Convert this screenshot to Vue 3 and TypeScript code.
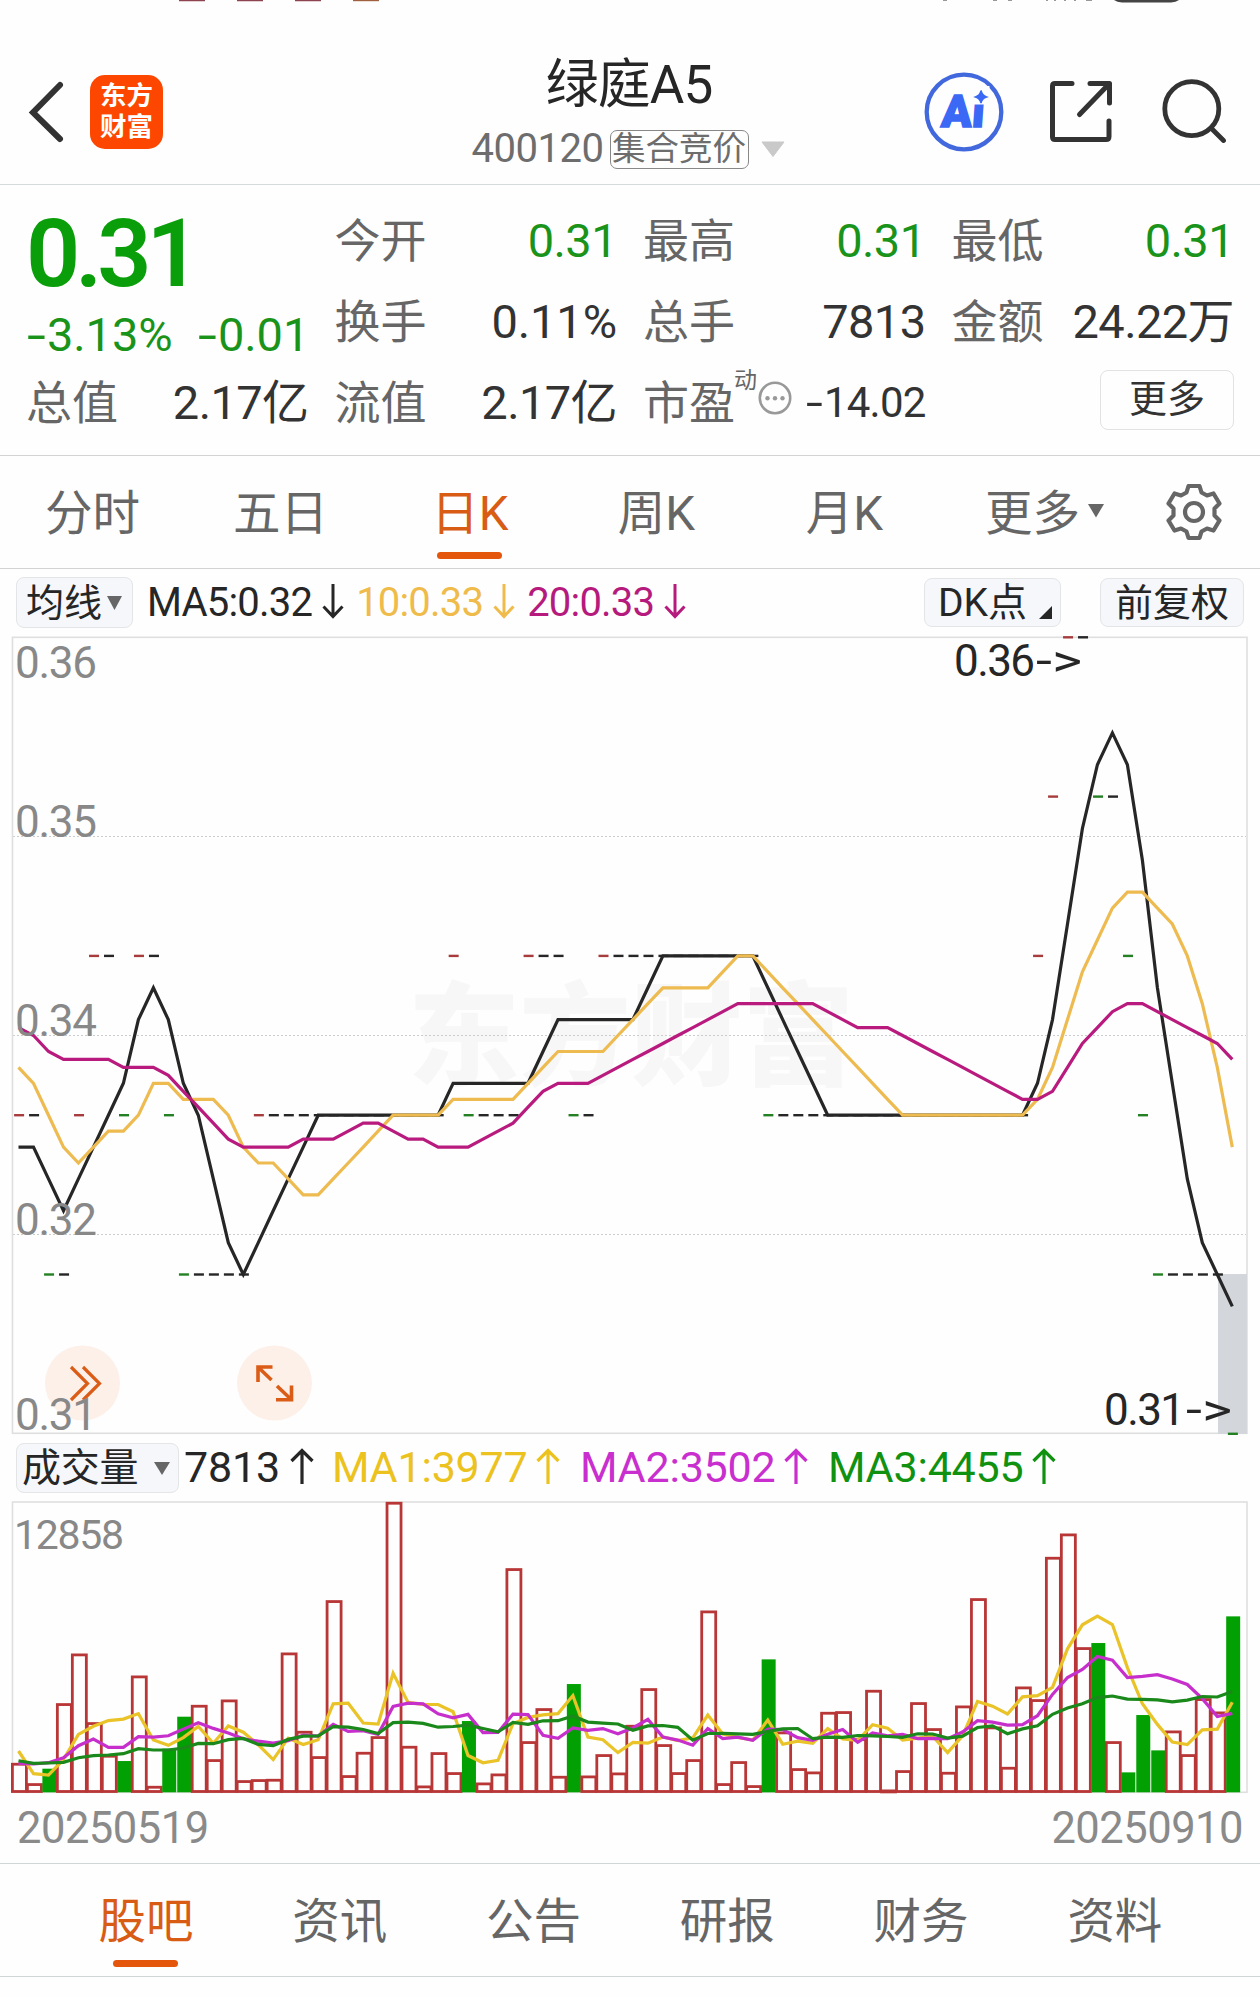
<script setup lang="ts">
interface Reading { name: string; value: string; color: string; dir: 'up' | 'down' }
interface Bar { x: number; y: number; h: number; fall: boolean }

const maReadings: Reading[] = [
  { name: 'MA5', value: '0.32', color: '#262626', dir: 'down' },
  { name: '10', value: '0.33', color: '#efbb4a', dir: 'down' },
  { name: '20', value: '0.33', color: '#b51a7c', dir: 'down' },
]
const volReadings: Reading[] = [
  { name: 'MA1', value: '3977', color: '#ecc21f', dir: 'up' },
  { name: 'MA2', value: '3502', color: '#c92fce', dir: 'up' },
  { name: 'MA3', value: '4455', color: '#109210', dir: 'up' },
]
const periods = ['分时', '五日', '日K', '周K', '月K']
const sections = ['股吧', '资讯', '公告', '研报', '财务', '资料']

const STEP = 14.985
const X0 = 18.5
const px = (i: number) => X0 + i * STEP

// Closing prices in ticks of 0.01 above 0.31; the first 19 precede the visible range.
const rep = (v: number, n: number): number[] => Array(n).fill(v)
const earlier = [3, 3, 2, 2, 3, 3, 3, 3, 3, 3, 3, 3, 3, 3, 2, 2, 2, 2, 1]
const closes = [
  2, 2, 1, 1, 2, 3, 3, 2, 3, 3, 2, ...rep(1, 5), ...rep(2, 13), 3, ...rep(2, 4), 3, 3, 3, 2, 2,
  ...rep(3, 11), ...rep(2, 18), 3, 4, 5, 5, 4, 4, 3, 2, ...rep(1, 5), 0,
]
const series = [...earlier, ...closes]
const priceY = (level: number) => 1433.8 - level * 159.3

function average(data: number[], end: number, n: number): number {
  let sum = 0
  for (let k = end - n + 1; k <= end; k++) sum += data[k]
  return sum / n
}
const priceLine = (n: number) =>
  closes.map((_, i) => `${px(i).toFixed(1)},${priceY(average(series, i + 19, n)).toFixed(1)}`).join(' ')

const ticks = closes.map((c, i) => {
  const prev = series[i + 18]
  return { x: px(i) - 4.4, y: priceY(c) - 1.2, color: c > prev ? '#a83c3c' : c < prev ? '#238023' : '#262626' }
})
const priceLines = [
  { color: '#262626', points: priceLine(5) },
  { color: '#edbb50', points: priceLine(10) },
  { color: '#b81a7e', points: priceLine(20) },
]
const axis = [
  { text: '0.36', y: 678 }, { text: '0.35', y: 836.5 }, { text: '0.34', y: 1036 },
  { text: '0.32', y: 1235 }, { text: '0.31', y: 1429.5 },
]

// Volume bar heights in thirds of a pixel.
const volumes = [
  86, 25, 69, 265, 414, 208, 110, 92, 348, 17, 129, 225, 260, 97, 276, 34, 37, 38, 417, 182, 106, 574, 49,
  119, 166, 869, 137, 18, 118, 58, 212, 27, 54, 670, 151, 250, 47, 323, 48, 112, 57, 200, 310, 142, 58, 97,
  543, 25, 91, 19, 397, 180, 70, 60, 239, 241, 160, 305, 6, 64, 268, 190, 59, 258, 580, 195, 74, 315, 277,
  704, 774, 433, 446, 151, 58, 230, 124, 183, 112, 280, 240, 526,
]
const BASE = 1791.7
const bars: Bar[] = volumes.map((v, i) => ({
  x: px(i), y: BASE - v / 3, h: v / 3, fall: closes[i] < series[i + 18],
}))
function volumeLine(n: number, lead: number[]): string {
  return volumes
    .map((_, i) => {
      const v = i < lead.length ? lead[i] : average(volumes, i, n)
      return `${px(i).toFixed(1)},${(BASE - v / 3).toFixed(1)}`
    })
    .join(' ')
}
const volumeLines = [
  { color: '#e9c327', points: volumeLine(5, [122, 54, 50, 97]) },
  { color: '#c62fcb', points: volumeLine(10, [85, 83, 87, 102, 138, 158, 133, 133, 165]) },
  { color: '#1a881a', points: volumeLine(20, [93, 85, 86, 88, 102, 108, 110, 114, 129, 125, 125, 131, 145, 144, 156, 160, 142, 138, 157]) },
]
</script>

<template>
  <div class="app">
    <header class="header">
      <svg class="status" width="1260" height="4" viewBox="0 0 1260 4">
        <path d="M179 0h26M237 0h26M295 0h26" stroke="#8d4450" stroke-width="2.4" />
        <path d="M353 0h26" stroke="#a0603f" stroke-width="2.4" />
        <path d="M943 0h4M993 0h4M1008 0h4M1046 0h2M1054 0h2M1064 0h2M1074 0h2M1086 0h6" stroke="#777" stroke-width="1.6" />
        <path d="M1114 0h65q-3 2.4-8 2.4h-49q-5 0-8-2.4z" fill="#444" />
      </svg>
      <div class="left">
        <svg width="36" height="62" viewBox="0 0 36 62"><path d="M32 4L5 31.500L32 58" fill="none" stroke="#333" stroke-width="6" stroke-linecap="round" stroke-linejoin="miter" /></svg>
        <div class="brand"><span>东方</span><span>财富</span></div>
      </div>
      <div class="title">
        <h1>绿庭A5</h1>
        <div class="sub">
          <span class="code">400120</span><span class="kind">集合竞价</span>
          <svg width="24" height="16" viewBox="0 0 24 16"><path d="M1 1h22L12 15.500z" fill="#c9c9c9" stroke="#c9c9c9" stroke-linejoin="round" /></svg>
        </div>
      </div>
      <div class="actions">
        <svg width="80" height="80" viewBox="925 72 80 80">
          <circle cx="965" cy="112" r="37.300" fill="none" stroke="#4268dd" stroke-width="4.300" />
          <g transform="translate(941.500 126.500) skewX(-4)"><text class="ai" x="0" y="0" textLength="43" lengthAdjust="spacingAndGlyphs">Ai</text></g>
          <rect x="972.500" y="86" width="18" height="18.500" fill="#fefefe" />
          <path d="M982 90.500q1 5 5.500 6.500q-4.500 1.500-5.500 6q-1-4.500-5.500-6q4.500-1.500 5.500-6z" fill="#3b68f5" stroke="#3b68f5" stroke-width="1.500" />
        </svg>
        <svg width="66" height="66" viewBox="1049 79 66 66" fill="none" stroke="#333" stroke-width="5" stroke-linecap="round" stroke-linejoin="round">
          <path d="M1073 83.500H1056q-2.500 0-2.500 2.500v51q0 2.500 2.500 2.500h51q3 0 3-3V121M1091 83.500h19.500V103M1109 85L1080.500 114.500" />
        </svg>
        <svg width="66" height="66" viewBox="1161 77 66 66" fill="none" stroke="#333" stroke-width="4.800" stroke-linecap="round">
          <circle cx="1192.800" cy="108.700" r="27" /><path d="M1213 129L1224.500 140.500" />
        </svg>
      </div>
    </header>

    <section class="stats">
      <div class="main">
        <div class="price">0.31</div>
        <div class="change"><span><i>-</i>3.13%</span><span><i>-</i>0.01</span></div>
      </div>
      <div class="stat"><span>今开</span><b class="green">0.31</b></div>
      <div class="stat"><span>最高</span><b class="green">0.31</b></div>
      <div class="stat"><span>最低</span><b class="green">0.31</b></div>
      <div class="stat"><span>换手</span><b class="pct">0.11%</b></div>
      <div class="stat"><span>总手</span><b>7813</b></div>
      <div class="stat"><span>金额</span><b>24.22万</b></div>
      <div class="stat"><span>总值</span><b>2.17亿</b></div>
      <div class="stat"><span>流值</span><b>2.17亿</b></div>
      <div class="stat pe">
        <span>市盈</span><sup>动</sup>
        <svg width="34" height="34" viewBox="0 0 34 34"><circle cx="17" cy="17" r="15.200" fill="none" stroke="#999" stroke-width="2.600" /><circle v-for="x in [9.5, 17, 24.5]" :key="x" :cx="x" cy="17.300" r="2.200" fill="#999" /></svg>
        <b><i>-</i>14.02</b>
      </div>
      <div class="more-cell"><button>更多</button></div>
    </section>

    <nav class="periods">
      <div v-for="p in periods" :key="p" class="tab" :class="{ on: p === '日K' }">{{ p }}</div>
      <div class="tab more">更多<svg width="16" height="14" viewBox="0 0 16 14"><path d="M0 0h16L8 13.500z" fill="#666" /></svg></div>
      <div class="gear">
        <svg width="58" height="60" viewBox="-29 -30 58 60" fill="none" stroke="#666" stroke-width="4.200" stroke-linejoin="round">
          <path d="M-5.500 -26H5.500L7.500 -19.500L13 -16.500L19.500 -18.500L25.500 -8.500L20.500 -3.500V3.500L25.500 8.500L19.500 18.500L13 16.500L7.500 19.500L5.500 26H-5.500L-7.500 19.500L-13 16.500L-19.500 18.500L-25.500 8.500L-20.500 3.500V-3.500L-25.500 -8.500L-19.500 -18.500L-13 -16.500L-7.500 -19.500Z" />
          <circle r="9" />
        </svg>
      </div>
    </nav>

    <div class="readings">
      <div class="pill avg">均线<svg width="15" height="14" viewBox="0 0 15 14"><path d="M0 0h15L7.500 14z" fill="#666" /></svg></div>
      <div class="values">
        <span v-for="r in maReadings" :key="r.name" :style="{ color: r.color }">{{ r.name }}:{{ r.value }}<svg width="22" height="36" viewBox="0 0 22 36" fill="none" stroke="currentColor" stroke-width="3"><path d="M11 1V33M1.500 23.500L11 33.500L20.500 23.500" /></svg></span>
      </div>
      <div class="pill dk">DK点<svg width="13" height="13" viewBox="0 0 13 13"><path d="M13 0V13H0z" fill="#262626" /></svg></div>
      <div class="pill adj">前复权</div>
    </div>

    <svg class="chart" width="1260" height="799" viewBox="0 636 1260 799">
      <text class="mark" x="408" y="1077" textLength="446" lengthAdjust="spacingAndGlyphs">东方财富</text>
      <path d="M13 836.500H1246M13 1035.500H1246M13 1234.500H1246" stroke="#ccc" stroke-width="1" stroke-dasharray="2 2" />
      <rect x="12.500" y="637.300" width="1234.500" height="796" fill="none" stroke="#dfdfdf" stroke-width="1.600" />
      <rect x="1218" y="1274" width="29" height="160" fill="#d3d6db" />
      <circle cx="82.500" cy="1383" r="37.500" fill="#fdf0e9" /><circle cx="274.500" cy="1383" r="37.500" fill="#fdf0e9" />
      <path d="M71 1367L87.500 1383.500L71 1400M83 1367L99.500 1383.500L83 1400" fill="none" stroke="#db5c17" stroke-width="3.200" />
      <path d="M258 1382V1367H272.500M258 1367L271.500 1380M291.500 1385.500V1399.700H276M291.500 1399.700L277 1386" fill="none" stroke="#db5c17" stroke-width="3.600" />
      <rect v-for="(t, i) in ticks" :key="i" :x="t.x" :y="t.y" width="10" height="2.400" :fill="t.color" />
      <polyline v-for="l in priceLines" :key="l.color" :points="l.points" fill="none" :stroke="l.color" stroke-width="3.200" />
      <text v-for="a in axis" :key="a.text" class="axis" x="15" :y="a.y" textLength="82">{{ a.text }}</text>
      <text class="note" x="954" y="676" textLength="81">0.36</text><text class="note" x="1036" y="676" textLength="46" lengthAdjust="spacingAndGlyphs">-&gt;</text>
      <text class="note" x="1104" y="1425" textLength="81">0.31</text><text class="note" x="1186" y="1425" textLength="46" lengthAdjust="spacingAndGlyphs">-&gt;</text>
    </svg>

    <div class="readings vol">
      <div class="pill volume">成交量<svg width="16" height="13" viewBox="0 0 16 13"><path d="M0 0h16L8 13z" fill="#666" /></svg></div>
      <div class="values">
        <span class="now">7813<svg width="24" height="38" viewBox="0 0 24 38" fill="none" stroke="currentColor" stroke-width="3.200"><path d="M12 37V4M1.500 14L12 3.500L22.500 14" /></svg></span>
        <span v-for="r in volReadings" :key="r.name" class="vma" :style="{ color: r.color }">{{ r.name }}:{{ r.value }}<svg width="24" height="38" viewBox="0 0 24 38" fill="none" stroke="currentColor" stroke-width="3.200"><path d="M12 37V4M1.500 14L12 3.500L22.500 14" /></svg></span>
      </div>
    </div>

    <svg class="chart" width="1260" height="294" viewBox="0 1501 1260 294">
      <rect x="12.500" y="1502" width="1234.500" height="290.300" fill="none" stroke="#dfdfdf" stroke-width="1.600" />
      <text class="axis small" x="14" y="1549" textLength="110">12858</text>
      <template v-for="(b, i) in bars" :key="i">
        <rect v-if="b.fall" :x="b.x - 6.1" :y="b.y" width="14" :height="b.h + 0.6" fill="#03a003" />
        <rect v-else :x="b.x - 6.1" :y="b.y + 1.2" width="14" :height="Math.max(b.h - 1.4, 1)" fill="#fefefe" stroke="#b83636" stroke-width="2.800" />
      </template>
      <polyline v-for="l in volumeLines" :key="l.color" :points="l.points" fill="none" :stroke="l.color" stroke-width="3.200" />
    </svg>

    <div class="dates"><span>20250519</span><span>20250910</span></div>

    <nav class="sections">
      <div v-for="s in sections" :key="s" class="tab" :class="{ on: s === '股吧' }">{{ s }}</div>
    </nav>
  </div>
</template>

<style>
body { background: #fefefe; }
</style>

<style scoped>
* { box-sizing: border-box; }
.app { width: 1260px; height: 1997px; background: #fefefe; color: #333; font-family: Roboto, "Noto Sans CJK SC", sans-serif; overflow: hidden; }
svg { display: block; flex: none; }
.chart { overflow: visible; }
.header { position: relative; height: 185px; border-bottom: 1px solid #d5dada; display: grid; grid-template-columns: 400px 460px 400px; }
.status { position: absolute; top: 0; left: 0; }
.left { display: flex; align-items: flex-start; padding: 75px 0 0 28px; }
.left > svg { margin-top: 6px; }
.brand { margin-left: 26px; width: 73px; height: 74px; border-radius: 15px; background: #fd4700; color: #fff; display: flex; flex-direction: column; align-items: center; justify-content: center; font-size: 26.500px; font-weight: 700; line-height: 31px; padding-bottom: 2px; }
.title { display: flex; flex-direction: column; align-items: center; padding-top: 50px; }
h1 { margin: 0; font-size: 53px; font-weight: 400; line-height: 70px; color: #262626; letter-spacing: -1px; position: relative; left: -1px; }
.sub { display: flex; align-items: center; color: #6d6d6d; height: 40px; margin-top: 9px; width: 317px; }
.code { font-size: 40px; letter-spacing: -0.5px; width: 138px; line-height: 40px; }
.kind { font-size: 33.500px; line-height: 36px; height: 39px; width: 139px; border: 1.500px solid #888; border-radius: 7px; display: flex; justify-content: center; }
.sub svg { margin-left: 12px; }
.actions { display: flex; align-items: center; justify-content: flex-end; padding: 40px 34px 0 0; height: 184px; }
.actions svg:nth-child(2) { margin-left: 44px; }
.actions svg:nth-child(3) { margin-left: 46px; position: relative; top: -2px; }
.ai { font-family: Roboto, sans-serif; font-size: 45px; font-weight: 900; fill: #3b68f5; stroke: #3b68f5; stroke-width: 1.500px; }

.stats { height: 271px; padding: 16px 26px 0; border-bottom: 1px solid #d3d3d3; display: grid; grid-template-columns: repeat(4, 282.500px); grid-template-rows: repeat(3, 81px); column-gap: 26px; }
.main { grid-row: 1 / span 2; color: #0a9f0a; }
.price { font-size: 95px; font-weight: 600; line-height: 100px; letter-spacing: -5px; padding: 3px 0 0 0; height: 98px; }
.change { display: flex; font-size: 47px; letter-spacing: -0.1px; line-height: 72px; color: #1a931a; padding-left: 1px; white-space: nowrap; }
.change span:first-child { width: 171px; flex: none; }
i { font-style: normal; display: inline-block; transform: scaleX(1.45); transform-origin: 0 50%; width: 20px; }
.stat { display: flex; justify-content: space-between; line-height: 81px; font-size: 46px; color: #666; white-space: nowrap; }
b { font-weight: 400; color: #333; font-size: 47px; letter-spacing: -0.6px; position: relative; top: -1.500px; }
b.green { color: #1a931a; }
b.pct { letter-spacing: -0.1px; }
.pe { justify-content: flex-start; }
.pe sup { font-size: 23px; line-height: 24px; margin: 6px 0 0 -1px; }
.pe svg { margin: 18px 0 0 1px; }
.pe b { font-size: 42px; margin-left: auto; letter-spacing: -0.8px; }
.pe b i { width: 18px; }
.more-cell { display: flex; justify-content: flex-end; }
button { margin: 7px 0 0; width: 134px; height: 60px; border: 1.500px solid #e2e2e2; border-radius: 8px; background: #fefefe; font: 38px/54px Roboto, "Noto Sans CJK SC", sans-serif; color: #333; padding: 0 0 2px; }

.periods { display: flex; height: 113px; border-bottom: 1px solid #d3d3d3; color: #666; }
.tab { position: relative; width: 188px; display: flex; align-items: center; justify-content: center; font-size: 47.500px; padding-bottom: 5px; }
.periods .tab { padding-right: 3px; }
.periods .tab.on { padding-right: 0; }
.tab.on { color: #d85c14; }
.tab.on::after { content: ''; position: absolute; left: 50%; margin-left: -33px; bottom: 9px; width: 65px; height: 7px; border-radius: 4px; background: #e4560c; }
.periods .tab.more { width: 212px; padding-right: 3px; }
.tab.more svg { margin-left: 8px; margin-top: 2px; }
.gear { width: 84px; display: flex; align-items: center; justify-content: center; }

.readings { display: flex; height: 67px; padding: 8px 0 0 16px; }
.pill { height: 51px; border: 1.500px solid #e3e5e7; border-radius: 8px; background: #f6f7fa; color: #262626; font-size: 38px; line-height: 46px; display: flex; align-items: center; white-space: nowrap; flex: none; }
.avg { width: 117px; padding-left: 9px; }
.avg svg { margin-left: 5px; }
.values { display: flex; line-height: 51px; font-size: 40px; letter-spacing: -0.8px; white-space: nowrap; }
.values span { display: flex; }
.readings .values { width: 791px; padding-left: 14px; }
.values svg { margin: 6px 0 0 10px; }
.values span + span { margin-left: 12px; }
.dk { width: 137px; height: 49px; margin-top: 1px; padding-left: 13px; font-size: 39px; }
.dk svg { margin: 19px 0 0 12px; }
.adj { width: 144px; height: 49px; margin: 1px 0 0 39px; justify-content: center; }
.mark { font-family: "Noto Sans CJK SC", sans-serif; font-weight: 900; font-size: 112px; fill: #f7f7f7; }
.axis { font-family: Roboto, sans-serif; font-size: 44px; fill: #888; }
.axis.small { font-size: 41px; }
.note { font-family: Roboto, sans-serif; font-size: 44px; fill: #262626; }

.vol { height: 66px; color: #262626; }
.volume { width: 163px; height: 50px; padding-left: 5px; font-size: 39px; letter-spacing: -0.3px; }
.volume svg { margin: 1px 0 0 16px; }
.readings.vol .values { width: auto; font-size: 43px; letter-spacing: -0.2px; line-height: 49px; padding-left: 5px; }
.vol .values svg { margin: 4px 0 0 10px; }
.vol .values .vma { width: 228px; justify-content: space-between; margin-left: 20px; }
.vol .values .now + .vma { margin-left: 18px; }
.vol .values .vma svg { margin-left: 0; }

.dates { height: 69px; border-bottom: 1px solid #d0d5d5; display: flex; justify-content: space-between; padding: 0 17px; font-size: 43.500px; letter-spacing: -0.5px; line-height: 68px; color: #8a8a8a; }
.sections { height: 113px; display: flex; padding-left: 49px; border-bottom: 1px solid #d0d5d5; color: #666; }
.sections .tab { width: 193.800px; }
</style>
